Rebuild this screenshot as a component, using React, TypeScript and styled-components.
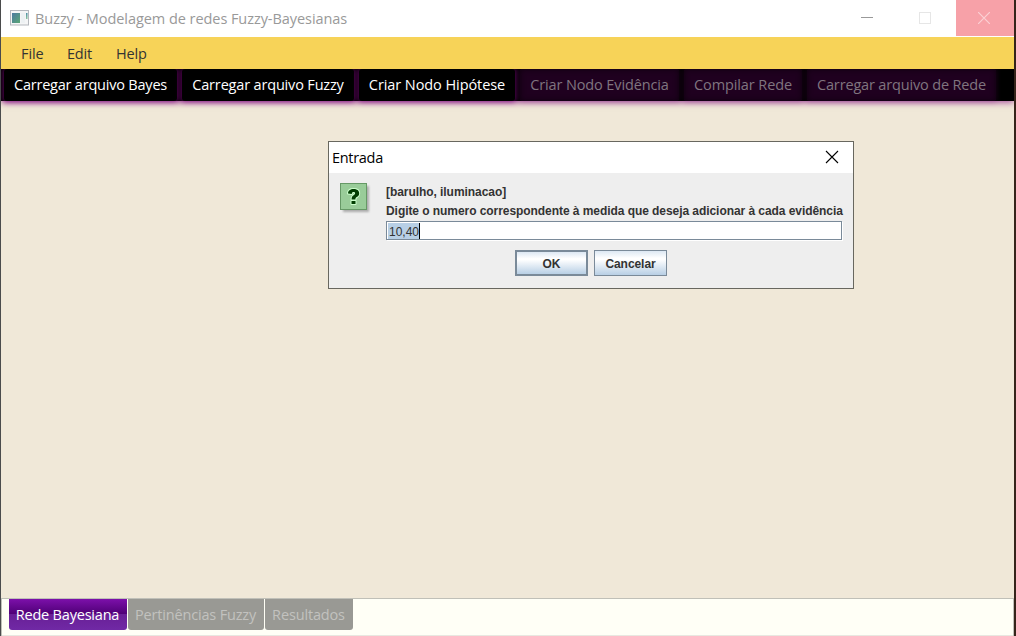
import React from 'react';
import styled, { createGlobalStyle, css } from 'styled-components';

const Global = createGlobalStyle`
  * { box-sizing: border-box; }
  body { margin: 0; overflow: hidden; font-family: 'Open Sans', 'Noto Sans', sans-serif; }
`;

const Window = styled.div`
  display: flex;
  flex-direction: column;
  width: 1016px;
  height: 636px;
  border-left: 1px solid #4a4b4c;
  border-right: 2px solid #35241a;
  background: #f0e8d8;
`;

const TitleBar = styled.header`
  display: flex;
  align-items: flex-start;
  flex: none;
  height: 37px;
  padding-left: 9px;
  background: #fff;
`;

const AppIcon = styled.svg`
  flex: none;
  margin: 10px 6px 0 0;
`;

const Label = styled.span<{ $spacing?: number }>`
  white-space: nowrap;
  letter-spacing: ${(p) => p.$spacing ?? 0}px;
`;

const WindowTitle = styled.h1`
  flex: 1;
  margin: 0;
  font-size: 14.5px;
  line-height: 37px;
  font-weight: 400;
  color: #999;
`;

const WindowButton = styled.button<{ $close?: boolean }>`
  display: flex;
  align-items: center;
  justify-content: center;
  width: 58px;
  height: 36px;
  padding: ${(p) => (p.$close ? '0 2px 0 0' : '0 4px 0 0')};
  border: 0;
  background: ${(p) => (p.$close ? '#f7a1a8' : 'transparent')};
`;

const MenuBar = styled.nav`
  display: flex;
  flex: none;
  height: 32px;
  padding-left: 20px;
  background: #f7d358;
  color: #333;
  font-size: 14.5px;
  line-height: 33px;
`;

const MenuItem = styled.span<{ $width: number }>`
  width: ${(p) => p.$width}px;
`;

const ToolBar = styled.div`
  display: flex;
  flex: none;
  gap: 5px;
  height: 32px;
  padding-left: 3px;
  background: #000;
  z-index: 1;
  box-shadow: 0 1px 7px rgba(130, 0, 130, 0.75);
  clip-path: inset(0 0 -12px 0);
`;

const ToolButton = styled.button<{ $width: number }>`
  display: flex;
  align-items: center;
  justify-content: center;
  flex: none;
  width: ${(p) => p.$width}px;
  height: 32px;
  padding: 0;
  border: 0;
  border-radius: 3px;
  background: #000;
  box-shadow: 0 0 5px 1px rgba(125, 0, 125, 0.7);
  color: #fff;
  font-family: inherit;
  font-size: 14.5px;
  line-height: 32px;

  &:disabled {
    background: #1f001f;
    box-shadow: inset 0 0 5px 1px #120012, 0 0 5px 1px rgba(110, 0, 105, 0.22);
    color: #80757f;
  }
`;

const Workspace = styled.main`
  display: flex;
  flex: 1;
  align-items: flex-start;
  padding: 40px 0 0 327px;
`;

const Dialog = styled.section`
  width: 526px;
  height: 148px;
  border: 1px solid #68675f;
  background: #eee;
  color: #333;
`;

const DialogTitle = styled.div`
  display: flex;
  justify-content: space-between;
  height: 31px;
  padding: 0 14px 0 3px;
  background: #fff;
  color: #000;
  font-size: 14.5px;
  line-height: 31px;
`;

const CloseIcon = styled.svg`
  margin-top: 8px;
`;

const DialogBody = styled.div`
  display: flex;
  padding: 10px 10px 0 11px;
  font-family: 'Liberation Sans', Arial, sans-serif;
  font-size: 12px;
`;

const QuestionIcon = styled.svg`
  flex: none;
  margin-right: 15px;
`;

const Message = styled.div`
  flex: 1;
  font-weight: 700;
  line-height: 19px;
`;

const MessageLine = styled.div`
  height: 19px;
  white-space: nowrap;
  letter-spacing: -0.06px;
`;

const Field = styled.div`
  display: flex;
  width: 456px;
  height: 19px;
  padding: 1px;
  border: 1px solid #7a8a99;
  box-shadow: 1px 1px 0 #fff;
  background: #fff;
  font-weight: 400;
  line-height: 18px;
`;

const Selection = styled.span`
  height: 16px;
  padding-left: 1px;
  border-right: 1px solid #000;
  background: #b8cfe5;
`;

const DialogActions = styled.div`
  display: flex;
  gap: 6px;
  padding: 10px 0 0 186px;
`;

const DialogButton = styled.button<{ $focused?: boolean }>`
  width: 73px;
  height: 26px;
  padding: 2px 0 0;
  border: ${(p) => (p.$focused ? 2 : 1)}px solid #7a8a99;
  background: linear-gradient(#dde8f3 0%, #fff 30%, #fff 35%, #b8cfe5 100%);
  color: #333;
  font: 700 12px/20px 'Liberation Sans', Arial, sans-serif;
  letter-spacing: -0.06px;
`;

const TabBar = styled.footer`
  display: flex;
  flex: none;
  gap: 1px;
  height: 38px;
  padding: 0 0 0 7px;
  border: 1px solid #c0c0b8;
  border-bottom: 0;
  box-shadow: inset 0 -2px 0 -1px #e8e8e0;
  background: #fffff6;
`;

const Tab = styled.div<{ $width: number; $active?: boolean }>`
  display: flex;
  justify-content: center;
  flex: none;
  width: ${(p) => p.$width}px;
  height: 31px;
  padding-right: 1px;
  border-radius: 0 0 3px 3px;
  background: #999994;
  color: #c2c2bf;
  font-size: 14.5px;
  line-height: 32px;
  ${(p) =>
    p.$active &&
    css`
      background: linear-gradient(#7c10aa 0, #4f0076 15px, #681f96 15px, #7029a5 100%);
      color: #fff;
    `}
`;

const tools = [
  { text: 'Carregar arquivo Bayes', width: 173, spacing: -0.21 },
  { text: 'Carregar arquivo Fuzzy', width: 172, spacing: -0.17 },
  { text: 'Criar Nodo Hipótese', width: 156, spacing: -0.08 },
  { text: 'Criar Nodo Evidência', width: 159, spacing: -0.12, disabled: true },
  { text: 'Compilar Rede', width: 118, spacing: -0.1, disabled: true },
  { text: 'Carregar arquivo de Rede', width: 189, spacing: -0.16, disabled: true },
];

export default function App() {
  return (
    <>
      <Global />
      <Window>
        <TitleBar>
          <AppIcon width="19" height="16" viewBox="0 0 19 16">
            <defs>
              <linearGradient id="screen" x1="0" y1="0" x2="1" y2="1">
                <stop offset="0" stopColor="#4c79a0" />
                <stop offset="1" stopColor="#5aa776" />
              </linearGradient>
              <linearGradient id="side" x1="0" y1="0" x2="0" y2="1">
                <stop offset="0" stopColor="#4c8fa8" />
                <stop offset="1" stopColor="#8cc49a" />
              </linearGradient>
            </defs>
            <rect x="0.5" y="0.5" width="18" height="14.5" fill="#f4f5f6" stroke="#b4b7bd" />
            <rect x="2" y="3" width="8" height="10" fill="url(#screen)" />
            <rect x="11" y="3" width="4" height="10" fill="#edf1f3" />
            <rect x="16" y="3" width="1.5" height="6" fill="url(#side)" />
          </AppIcon>
          <WindowTitle><Label $spacing={-0.06}>Buzzy - Modelagem de redes Fuzzy-Bayesianas</Label></WindowTitle>
          <WindowButton aria-label="Minimizar">
            <svg width="12" height="12"><path d="M0 5.5H12" stroke="#999" /></svg>
          </WindowButton>
          <WindowButton aria-label="Maximizar">
            <svg width="12" height="12"><rect x=".5" y=".5" width="11" height="11" fill="none" stroke="#e6e6e6" /></svg>
          </WindowButton>
          <WindowButton $close aria-label="Fechar">
            <svg width="12" height="12"><path d="M0 0L12 12M12 0L0 12" stroke="#fbd0d4" strokeWidth="1.2" /></svg>
          </WindowButton>
        </TitleBar>
        <MenuBar>
          <MenuItem $width={46}><Label $spacing={-0.1}>File</Label></MenuItem>
          <MenuItem $width={49}><Label $spacing={-0.2}>Edit</Label></MenuItem>
          <MenuItem $width={40}><Label $spacing={-0.2}>Help</Label></MenuItem>
        </MenuBar>
        <ToolBar>
          {tools.map((t) => (
            <ToolButton key={t.text} $width={t.width} disabled={t.disabled}>
              <Label $spacing={t.spacing}>{t.text}</Label>
            </ToolButton>
          ))}
        </ToolBar>
        <Workspace>
          <Dialog>
            <DialogTitle>
              <Label $spacing={-0.3}>Entrada</Label>
              <CloseIcon width="14" height="14"><path d="M1 1L13 13M13 1L1 13" stroke="#000" strokeWidth="1.1" /></CloseIcon>
            </DialogTitle>
            <DialogBody>
              <QuestionIcon width="31" height="32" viewBox="0 0 31 32">
                <defs>
                  <filter id="soft" x="-20%" y="-20%" width="140%" height="140%"><feGaussianBlur stdDeviation="1" /></filter>
                </defs>
                <rect x="3" y="3" width="26" height="26" fill="#aaa" filter="url(#soft)" />
                <rect x="0.5" y="0.5" width="26" height="26" fill="#99cc99" stroke="#669966" />
                <path
                  d="M8 10.6C8 7.6 10.4 6 13.5 6C17 6 19.2 7.6 19.2 10.2C19.2 12.4 18 13.2 16.7 14.1C15.7 14.8 15.4 15.2 15.4 16.4H11.6C11.6 14 12.2 13.2 13.6 12.2C14.6 11.5 15.1 11.1 15.1 10.3C15.1 9.5 14.5 9.1 13.6 9.1C12.5 9.1 11.9 9.7 11.8 11ZM11.5 18H15.5V21H11.5Z"
                  fill="#003d00"
                  stroke="#ccffcc"
                  strokeWidth="2"
                  strokeLinejoin="round"
                  paintOrder="stroke"
                />
              </QuestionIcon>
              <Message>
                <MessageLine>[barulho, iluminacao]</MessageLine>
                <MessageLine>Digite o numero correspondente à medida que deseja adicionar à cada evidência</MessageLine>
                <Field><Selection>10,40</Selection></Field>
              </Message>
            </DialogBody>
            <DialogActions>
              <DialogButton $focused>OK</DialogButton>
              <DialogButton>Cancelar</DialogButton>
            </DialogActions>
          </Dialog>
        </Workspace>
        <TabBar>
          <Tab $width={118} $active><Label $spacing={-0.2}>Rede Bayesiana</Label></Tab>
          <Tab $width={136}><Label $spacing={-0.17}>Pertinências Fuzzy</Label></Tab>
          <Tab $width={88}><Label $spacing={-0.15}>Resultados</Label></Tab>
        </TabBar>
      </Window>
    </>
  );
}
